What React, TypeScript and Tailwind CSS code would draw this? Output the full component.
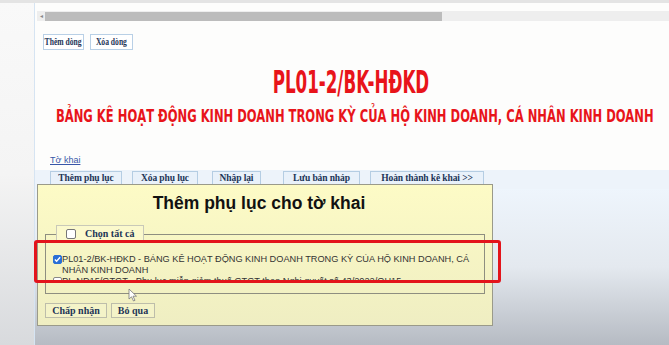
import React from "react";

const serif = { fontFamily: '"Liberation Serif", "Times New Roman", serif' };
const sans = { fontFamily: '"Liberation Sans", Arial, sans-serif' };
const narrow = { fontFamily: '"DejaVu Sans Condensed", "Liberation Sans", sans-serif' };

const SmallBtn = ({ label, w }: { label: string; w: string }) => (
  <div
    className={`flex h-[16px] items-center justify-center whitespace-nowrap border border-[#b9d0e6] bg-white text-[9.5px] font-bold text-[#1d3557] ${w}`}
    style={serif}
  >
    <span className="inline-block scale-x-[0.8]">{label}</span>
  </div>
);

const BarBtn = ({ label, w }: { label: string; w: string }) => (
  <div
    className={`flex h-[15px] items-center justify-center whitespace-nowrap border border-[#b5cde3] bg-[#e9f1fa] text-[9.5px] font-bold tracking-[-0.1px] text-[#1d3557] ${w}`}
    style={serif}
  >
    {label}
  </div>
);

const Cursor = () => (
  <svg width="10" height="14" viewBox="0 0 10 14" className="absolute left-[128px] top-[288px]">
    <path d="M1 1 L1 11 L3.5 8.8 L5.5 13 L7 12.3 L5 8.2 L8.5 8.2 Z" fill="#fff" stroke="#777" strokeWidth="0.8" />
  </svg>
);

function App() {
  const items = [
    "PL01-2/BK-HĐKD - BẢNG KÊ HOẠT ĐỘNG KINH DOANH TRONG KỲ CỦA HỘ KINH DOANH, CÁ NHÂN KINH DOANH",
    "PL-ND15/GTGT - Phụ lục miễn giảm thuế GTGT theo Nghị quyết số 43/2022/QH15",
  ];

  return (
    <div className="relative flex h-[345px] w-[669px] flex-col overflow-hidden bg-[#fdfdfc]">
      <div className="h-[3px] bg-[#e4e4e4]" />
      <div className="flex flex-1">
        <div className="w-[35px] border-r border-[#d6e4f2] bg-gradient-to-b from-[#f9f9f9] via-[#f4f4f4] to-[#d8dadd]" />
        <div className="flex min-w-0 flex-1 flex-col">
          {/* horizontal scrollbar */}
          <div className="ml-[2px] mt-[8px] flex h-[10px] items-center bg-[#eeeeee]">
            <span className="ml-[3px] w-[5px] text-[6px] leading-none text-[#888]">◂</span>
            <div className="h-[9px] w-[397px] bg-[#bcbcbc]" />
          </div>

          <div className="ml-[8px] mt-[13px] flex gap-[6px]">
            <SmallBtn label="Thêm dòng" w="w-[41px]" />
            <SmallBtn label="Xóa dòng" w="w-[43px]" />
          </div>

          <div className="mt-[17px] flex flex-col items-center">
            <div
              className="mr-[2px] scale-x-[0.58] whitespace-nowrap text-[32px] font-bold leading-[30px] text-[#e8141a]"
              style={narrow}
            >
              PL01-2/BK-HĐKD
            </div>
            <div
              className="ml-[6px] mt-[9px] scale-x-[0.755] whitespace-nowrap text-[17px] font-bold leading-[20px] text-[#e8141a]"
              style={narrow}
            >
              BẢNG KÊ HOẠT ĐỘNG KINH DOANH TRONG KỲ CỦA HỘ KINH DOANH, CÁ NHÂN KINH DOANH
            </div>
          </div>

          <div className="ml-[15px] mt-[28px] text-[9px] leading-[12px] text-[#3856a8] underline" style={sans}>
            Tờ khai
          </div>

          <div className="mt-[4px] flex h-[19px] items-start gap-[10px] bg-[#edf3fa] pl-[15px] pt-[1px]">
            <BarBtn label="Thêm phụ lục" w="w-[72px]" />
            <BarBtn label="Xóa phụ lục" w="w-[66px]" />
            <div className="ml-[4px]"><BarBtn label="Nhập lại" w="w-[49px]" /></div>
            <div className="ml-[12px]"><BarBtn label="Lưu bản nháp" w="w-[77px]" /></div>
            <BarBtn label="Hoàn thành kê khai >>" w="w-[114px]" />
          </div>

          <div className="flex-1 bg-gradient-to-b from-[#eef5fc] via-[#e4e9ef] to-[#b6bbc3]" />
        </div>
      </div>

      {/* dialog */}
      <div className="absolute left-[37px] top-[184px] flex h-[142px] w-[456px] flex-col border border-[#9a9a8a] bg-gradient-to-b from-[#fdfbc6] to-[#efeec2]">
        <div className="mt-[7px] pr-[12px] text-center text-[17.5px] font-bold leading-[22px] text-[#111]" style={sans}>
          Thêm phụ lục cho tờ khai
        </div>

        <div className="relative mx-[7px] mt-[20px] h-[60px] border border-[#8e8e80]">
          <div
            className="absolute left-[10px] top-[-10px] flex h-[17px] items-center gap-[9px] border border-[#c9c9b8] bg-[#fbf9cc] px-[9px] text-[10px] font-bold text-[#1d3557]"
            style={serif}
          >
            <span className="h-[10px] w-[10px] rounded-[2px] border border-[#777] bg-white" />
            Chọn tất cả
          </div>
          <div className="mt-[19px] h-[29px] overflow-hidden pl-[7px] pr-[8px]">
            {items.map((t, i) => (
              <div key={t} className="flex items-start text-[9.2px] leading-[11px] text-[#333]" style={sans}>
                <span
                  className={`mt-[1px] flex h-[9px] w-[9px] shrink-0 items-center justify-center rounded-[2px] border ${i === 0 ? "border-[#2a6fd6] bg-[#2a6fd6]" : "border-[#888] bg-white"}`}
                >
                  {i === 0 && (
                    <svg width="7" height="7" viewBox="0 0 8 8">
                      <path d="M1 4 L3 6 L7 1.5" fill="none" stroke="#fff" strokeWidth="1.6" />
                    </svg>
                  )}
                </span>
                <span>{t}</span>
              </div>
            ))}
          </div>
        </div>

        <div className="ml-[7px] mt-[9px] flex gap-[4px]">
          <div className="flex h-[15px] w-[62px] items-center justify-center border border-[#bdbdaa] bg-[#f4f3c8] text-[10px] font-bold text-[#1d3557]" style={serif}>
            Chấp nhận
          </div>
          <div className="flex h-[15px] w-[44px] items-center justify-center border border-[#bdbdaa] bg-[#f4f3c8] text-[10px] font-bold text-[#1d3557]" style={serif}>
            Bỏ qua
          </div>
        </div>
      </div>

      {/* annotation */}
      <div className="absolute left-[34px] top-[240px] h-[43px] w-[467px] rounded-[3px] border-[3px] border-[#e3141b]" />
      <Cursor />
    </div>
  );
}

export default App;
